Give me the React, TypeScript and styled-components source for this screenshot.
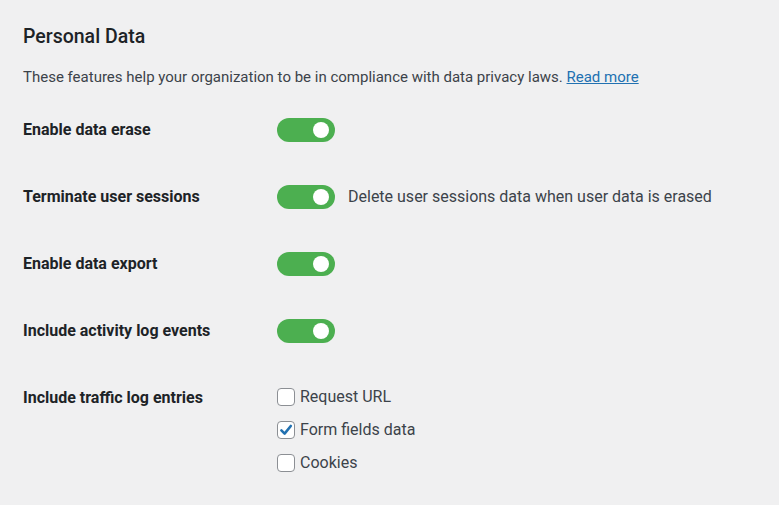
import styled, { createGlobalStyle } from "styled-components";

const GlobalStyle = createGlobalStyle`
  html, body {
    margin: 0;
    padding: 0;
    background: #f0f0f1;
  }
  body {
    font-family: Roboto, "Liberation Sans", sans-serif;
    color: #1d2327;
  }
`;

const settings = [
  { label: "Enable data erase", on: true },
  {
    label: "Terminate user sessions",
    on: true,
    hint: "Delete user sessions data when user data is erased",
  },
  { label: "Enable data export", on: true },
  { label: "Include activity log events", on: true },
];

const trafficOptions = [
  { label: "Request URL", checked: false },
  { label: "Form fields data", checked: true },
  { label: "Cookies", checked: false },
];

const App = () => {
  return (
    <>
      <GlobalStyle />
      <Page>
        <Title>Personal Data</Title>
        <Intro>
          These features help your organization to be in compliance with data
          privacy laws. <a href="#">Read more</a>
        </Intro>

        <Table>
          {settings.map((s) => (
            <Row key={s.label}>
              <Label>{s.label}</Label>
              <Field>
                <Toggle $on={s.on}>
                  <Knob />
                </Toggle>
                {s.hint && <Hint>{s.hint}</Hint>}
              </Field>
            </Row>
          ))}

          <Row>
            <Label>Include traffic log entries</Label>
            <Checks>
              {trafficOptions.map((o) => (
                <CheckRow key={o.label}>
                  <Box>
                    {o.checked && (
                      <svg width="14" height="14" viewBox="0 0 14 14">
                        <path
                          d="M2.4 7.4 L5.6 10.6 L11.8 3"
                          fill="none"
                          stroke="#2271b1"
                          strokeWidth="2.6"
                          strokeLinecap="round"
                          strokeLinejoin="round"
                        />
                      </svg>
                    )}
                  </Box>
                  {o.label}
                </CheckRow>
              ))}
            </Checks>
          </Row>
        </Table>
      </Page>
    </>
  );
};

export default App;

const Page = styled.div`
  padding: 25px 23px;
`;

const Title = styled.h2`
  margin: 0;
  font-size: 19.5px;
  font-weight: 500;
  line-height: 24px;
  color: #1d2327;
`;

const Intro = styled.p`
  margin: 16px 0 0;
  font-size: 15px;
  line-height: 24px;
  color: #3c434a;

  a {
    color: #2271b1;
    text-decoration: underline;
  }
`;

const Table = styled.div`
  margin-top: 29px;
  display: flex;
  flex-direction: column;
  gap: 43px;
`;

const Row = styled.div`
  display: grid;
  grid-template-columns: 254px 1fr;
  align-items: start;
`;

const Label = styled.div`
  font-size: 16px;
  font-weight: 700;
  line-height: 24px;
  color: #1d2327;
`;

const Field = styled.div`
  display: flex;
  align-items: center;
  gap: 13px;
`;

const Toggle = styled.div<{ $on: boolean }>`
  width: 58px;
  height: 24px;
  border-radius: 12px;
  background: ${({ $on }) => ($on ? "#4caf50" : "#c3c4c7")};
  display: flex;
  align-items: center;
  justify-content: ${({ $on }) => ($on ? "flex-end" : "flex-start")};
  padding: 0 6px;
  box-sizing: border-box;
`;

const Knob = styled.span`
  width: 16px;
  height: 16px;
  border-radius: 50%;
  background: #fff;
`;

const Hint = styled.span`
  font-size: 16px;
  line-height: 24px;
  color: #3c434a;
`;

const Checks = styled.div`
  display: flex;
  flex-direction: column;
  gap: 9px;
  margin-top: -1px;
`;

const CheckRow = styled.label`
  display: flex;
  align-items: center;
  gap: 5px;
  font-size: 16px;
  line-height: 24px;
  color: #3c434a;
`;

const Box = styled.span`
  width: 16px;
  height: 16px;
  border: 1px solid #8c8f94;
  border-radius: 4px;
  background: #fff;
  display: flex;
  align-items: center;
  justify-content: center;
`;
